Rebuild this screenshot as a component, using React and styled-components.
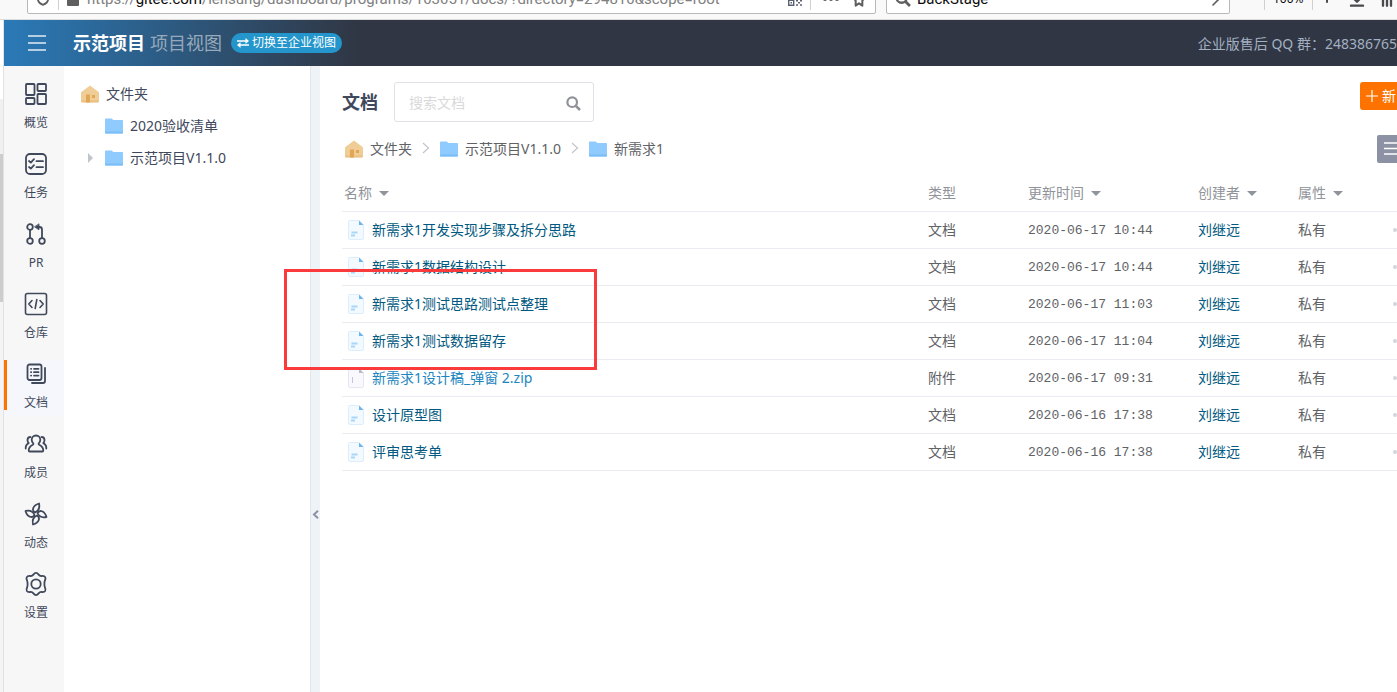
import React, { useState } from 'react';
import styled, { createGlobalStyle } from 'styled-components';

const GlobalStyle = createGlobalStyle`
  * {
    box-sizing: border-box;
  }
  body {
    margin: 0;
    background: #fff;
    color: #40485b;
    font-family: "Noto Sans", "Noto Sans CJK SC", sans-serif;
    font-size: 14px;
    line-height: 20px;
    overflow: hidden;
  }
  button, input {
    font: inherit;
    color: inherit;
    margin: 0;
    padding: 0;
    border: 0;
    background: none;
    outline: none;
  }
  a {
    color: inherit;
    text-decoration: none;
  }
  svg {
    display: block;
    flex: none;
  }
`

const Page = styled.div`
  display: flex;
  flex-direction: column;
  min-height: 100vh;
`

/* browser toolbar */
const BrowserBar = styled.div`
  display: flex;
  align-items: flex-end;
  gap: 10px;
  height: 20px;
  padding: 0 0 5px 27px;
  background: #f9f9fa;
  border-bottom: 1px solid #dcdcdc;
  overflow: hidden;
`
const BrowserField = styled.div`
  display: flex;
  align-items: center;
  flex: ${props => props.$width ? `0 0 ${props.$width}` : '1'};
  min-width: 0;
  height: 30px;
  padding: 0 8px;
  background: #fff;
  border: 1px solid #b8b8b8;
  border-radius: 2px;
  color: #5f5f5f;
`
const Url = styled.div`
  flex: 1;
  min-width: 0;
  padding-left: 8px;
  color: #808080;
  font-family: Roboto, sans-serif;
  font-size: 15px;
  white-space: nowrap;
  overflow: hidden;
`
const Host = styled.span`
  color: #0c0c0d;
`
const Divider = styled.span`
  flex: none;
  width: 1px;
  height: 22px;
  margin: 0 8px;
  background: #d0d0d0;
`
const PageActions = styled.div`
  display: flex;
  gap: 8px;
`
const BrowserSearch = styled.input`
  flex: 1;
  min-width: 0;
  padding-left: 6px;
  color: #0c0c0d;
  font-family: Roboto, sans-serif;
  font-size: 15px;
`
const BrowserTools = styled.div`
  display: flex;
  align-items: center;
  flex: none;
  width: 157px;
  height: 30px;
  padding-left: 16px;
  color: #4a4a4f;
  overflow: hidden;
`
const Zoom = styled.span`
  color: #0c0c0d;
  font-size: 12px;
`
const ToolIcons = styled.div`
  display: flex;
  gap: 16px;
`

/* page body */
const Body = styled.div`
  display: flex;
  flex: 1;
`
const Scroll = styled.div`
  flex: none;
  width: 4px;
  padding-top: 79px;
  background: linear-gradient(#fff 79px, #f4f4f4 79px);
  border-right: 1px solid #e2e2e2;
`
const ScrollTrack = styled.div`
  height: 55px;
  background: #f0f0f0;
`
const ScrollThumb = styled.div`
  height: 148px;
  background: #cdcdcd;
`
const Workspace = styled.div`
  display: flex;
  flex-direction: column;
  flex: 1;
  min-width: 0;
`
const Header = styled.header`
  display: flex;
  align-items: center;
  height: 46px;
  padding-left: 24px;
  color: #fff;
  background: linear-gradient(90deg, #2a7ab8 0, #303643 356px);
`
const MenuButton = styled.button`
  width: 18px;
  margin-right: 27px;
  color: #e3ecf4;
`
const ProjectName = styled.h1`
  margin: 0 5px 0 0;
  font-size: 18px;
  font-weight: 700;
`
const ViewName = styled.span`
  margin-right: 9px;
  color: #97a9bb;
  font-size: 18px;
`
const SwitchButton = styled.button`
  display: flex;
  align-items: center;
  gap: 3px;
  height: 20px;
  padding: 0 6px;
  border-radius: 10px;
  background: #2496cb;
  font-size: 12px;
`
const Support = styled.span`
  margin-left: auto;
  padding-top: 2px;
  color: #a3b0c2;
  white-space: nowrap;
`

const Main = styled.div`
  display: flex;
  flex: 1;
  position: relative;
`
const SideNav = styled.nav`
  display: flex;
  flex-direction: column;
  gap: 14px;
  flex: none;
  width: 60px;
  padding-top: 14px;
  background: #f7f7f7;
`
const NavItem = styled.a`
  display: flex;
  flex-direction: column;
  align-items: center;
  gap: 7px;
  position: relative;
  height: 56px;
  padding: 2px 0 0 4px;
  color: #40485b;
  background: ${props => props.$active ? '#f5f7fc' : 'transparent'};
  font-size: 12px;

  &::before {
    content: '';
    display: ${props => props.$active ? 'block' : 'none'};
    position: absolute;
    left: 0;
    top: 0;
    width: 3px;
    height: 50px;
    background: #fe7300;
  }
`
const Tree = styled.aside`
  flex: none;
  width: 246px;
  padding: 12px 0 0 17px;
`
const TreeRow = styled.a`
  display: flex;
  align-items: center;
  gap: 7px;
  height: 32px;
  padding-left: ${props => props.$child ? '24px' : '0'};
  position: relative;
`
const TreeArrow = styled.span`
  position: absolute;
  left: 7px;
  top: 11px;
  border: 5px solid transparent;
  border-left-color: #c0c4cc;
  border-right: 0;
`
const Splitter = styled.button`
  display: flex;
  align-items: flex-start;
  justify-content: center;
  flex: none;
  width: 10px;
  padding-top: 444px;
  background: #edf3f6;
  border-left: 1px solid #e0e6ea;
  color: #8c92a4;
`

const Content = styled.main`
  flex: 1;
  min-width: 0;
  padding: 16px 0 0 22px;
  overflow: hidden;
`
const TitleRow = styled.div`
  display: flex;
  align-items: flex-start;
`
const Title = styled.h2`
  margin: 0 16px 0 0;
  font-size: 18px;
  line-height: 40px;
`
const SearchBox = styled.label`
  display: flex;
  align-items: center;
  width: 200px;
  height: 40px;
  padding: 2px 12px 0 14px;
  border: 1px solid #dfe1e8;
  border-radius: 3px;
  color: #8f9298;
`
const SearchInput = styled.input`
  flex: 1;
  min-width: 0;

  &::placeholder {
    color: #d9d9d9;
    opacity: 1;
  }
`
const NewButton = styled.button`
  display: flex;
  align-items: center;
  gap: 4px;
  width: 37px;
  height: 28px;
  margin-left: auto;
  padding-left: 6px;
  border-radius: 3px 0 0 3px;
  background: #fe7300;
  color: #fff;
  overflow: hidden;
`
const CrumbRow = styled.div`
  display: flex;
  align-items: center;
  justify-content: space-between;
  height: 28px;
  margin: 13px 0;
`
const Crumbs = styled.nav`
  display: flex;
  align-items: center;
  gap: 10px;
  padding-left: 3px;
  color: #606266;
`
const Crumb = styled.a`
  display: flex;
  align-items: center;
  gap: 7px;
`
const ListButton = styled.button`
  display: flex;
  align-items: center;
  width: 20px;
  height: 28px;
  padding-left: 7px;
  border-radius: 2px 0 0 2px;
  background: #8c92a4;
  color: #fff;
  overflow: hidden;
`

const Table = styled.table`
  width: 100%;
  table-layout: fixed;
  border-collapse: collapse;
  color: #606266;
`
const Th = styled.th`
  width: ${props => props.$width || 'auto'};
  height: 35px;
  padding: 0 0 0 ${props => props.$first ? '2px' : '0'};
  border-bottom: 1px solid #ebecf1;
  color: #909399;
  font-weight: 400;
  text-align: left;
`
const SortButton = styled.button`
  display: flex;
  align-items: center;
  gap: 7px;
`
const Caret = styled.span`
  border: 5px solid transparent;
  border-top-color: #8f939c;
  border-bottom: 0;
`
const Td = styled.td`
  height: 37px;
  padding: 0;
  border-bottom: 1px solid #ebecf1;
  overflow: hidden;
`
const FileLink = styled.a`
  display: flex;
  align-items: center;
  gap: 8px;
  padding-left: 6px;
  color: ${props => props.$attachment ? '#1b86c0' : '#005980'};
`
const Time = styled.time`
  font-family: "Liberation Mono", monospace;
  font-size: 13px;
`
const UserLink = styled.a`
  color: #005980;
`
const MoreButton = styled.button`
  display: block;
  color: #d3d5db;
`
const Highlight = styled.div`
  position: absolute;
  left: 280px;
  top: 203px;
  width: 313px;
  height: 101px;
  border: 3px solid #fb3b3b;
  pointer-events: none;
`

const Line = ({ size = 24, width = 1.8, children }) => (
  <svg width={size} height={size} viewBox="0 0 24 24" fill="none" stroke="currentColor" strokeWidth={width} strokeLinecap="round" strokeLinejoin="round">
    {children}
  </svg>
)

const navIcons = {
  overview: (
    <Line>
      <rect x="2" y="2" width="8.5" height="11" rx="0.8" />
      <rect x="13.5" y="2" width="8.5" height="7" rx="0.8" />
      <rect x="2" y="16" width="8.5" height="6" rx="0.8" />
      <rect x="13.5" y="12" width="8.5" height="10" rx="0.8" />
    </Line>
  ),
  task: (
    <Line>
      <rect x="2" y="2" width="20" height="20" rx="4" />
      <path d="M5 9l1.8 1.6L10 7.2M5 15l1.8 1.6L10 13.2M12.5 9.2H19M12.5 15.2H19" />
    </Line>
  ),
  pr: (
    <Line>
      <circle cx="6" cy="5" r="2.8" />
      <circle cx="6" cy="19" r="2.8" />
      <circle cx="18" cy="19" r="2.8" />
      <path d="M6 8v8M18 16V7.5a2.5 2.5 0 0 0-2.5-2.5H13" />
      <path d="M15 2.2v5.6L10.8 5z" fill="currentColor" strokeWidth="0.8" />
    </Line>
  ),
  code: (
    <Line width={1.6}>
      <rect x="1.5" y="1.5" width="21" height="21" rx="2" />
      <path d="M8 8.5L4.8 12 8 15.5M16 8.5l3.2 3.5-3.2 3.5M12.8 7.5l-1.6 9" />
    </Line>
  ),
  doc: (
    <Line>
      <rect x="3.5" y="2.5" width="14" height="15.5" rx="2" />
      <path d="M21 6v13a2 2 0 0 1-2 2H8" />
      <path d="M7 6.8h.2M7 10.2h.2M7 13.6h.2M10 6.8h4.5M10 10.2h4.5M10 13.6h4.5" />
    </Line>
  ),
  member: (
    <Line width={1.8}>
      <path d="M12 3.5c-2.7 0-4.3 2-4.3 4.3 0 1.7.7 2.8 1.5 3.6.4.5.1 1-.4 1.3-2.2 1.1-4.1 2.4-4.1 5.8 0 .7.3 1 1 1h12.6c.7 0 1-.3 1-1 0-3.4-1.9-4.700-4.100-5.800-.5-.3-.8-.8-.4-1.300.8-.8 1.500-1.900 1.500-3.600 0-2.300-1.600-4.300-4.300-4.300z" />
      <path d="M6.500 5C4.700 5 3.500 6.400 3.500 8.200c0 1.300.5 2.200 1.200 2.900C3 12 1.500 13.500 1.700 16.500M17.500 5c1.800 0 3 1.400 3 3.200 0 1.300-.5 2.200-1.200 2.900 1.700.9 3.200 2.400 3 5.400" />
    </Line>
  ),
  activity: (
    <Line width={1.8}>
      <path d="M11 10.5C7.500 8.500 8.500 3.500 15 1.500 16 6 14.500 9 11 10.500z" />
      <path d="M13.500 11C15.500 7.500 20.500 8.500 22.500 15 18 16 15 14.500 13.500 11z" />
      <path d="M13 13.500c3.500 2 2.500 7-4 9C8 18 9.500 15 13 13.500z" />
      <path d="M10.500 13C8.500 16.500 3.500 15.500 1.500 9 6 8 9 9.500 10.500 13z" />
    </Line>
  ),
  setting: (
    <Line width={1.8}>
      <path d="M12 .9c1.200 0 1.800.6 2.600 1.700.9 1.200 1.700 1.600 3.200 1.400 1.700-.2 2.700-.1 3.400 1.100.6 1.100.5 1.900-.2 3.200-.8 1.500-.8 5.900 0 7.400.7 1.300.8 2.100.2 3.200-.7 1.200-1.700 1.300-3.400 1.100-1.500-.2-2.300.2-3.200 1.400-.8 1.100-1.400 1.700-2.600 1.700s-1.800-.6-2.600-1.700c-.9-1.200-1.700-1.600-3.200-1.400-1.700.2-2.700.1-3.400-1.100-.6-1.100-.5-1.900.2-3.200.8-1.500.8-5.900 0-7.400-.7-1.300-.8-2.100-.2-3.200.7-1.200 1.700-1.300 3.400-1.100 1.500.2 2.300-.2 3.200-1.400C10.200 1.500 10.800.9 12 .9z" />
      <circle cx="12" cy="12" r="4.700" />
    </Line>
  ),
}

const HomeIcon = () => (
  <svg width="18" height="18" viewBox="0 0 18 18">
    <path d="M9 0.500L17.600 7c.3.300.4.500.4.900V16a1.500 1.500 0 0 1-1.500 1.500h-15A1.500 1.500 0 0 1 0 16V7.900c0-.4.100-.6.400-.9z" fill="#f0cd97" />
    <path d="M5 9.500h4v8H5zM11 10h3v3h-3z" fill="#e2a755" />
    <path d="M0 15.500h18V16a1.500 1.500 0 0 1-1.500 1.500h-15A1.500 1.500 0 0 1 0 16z" fill="#e2a755" opacity=".35" />
  </svg>
)

const FolderIcon = () => (
  <svg width="18" height="16" viewBox="0 0 18 16">
    <path d="M0 1.500C0 .7.500.500 1 .500h5.500c.8 0 1.200 1.500 2 1.500H17c.6 0 1 .4 1 1V14.500c0 .6-.4 1-1 1H1c-.600 0-1-.4-1-1z" fill="#90cbff" />
    <path d="M0 13.500h18v1c0 .6-.4 1-1 1H1c-.6 0-1-.4-1-1z" fill="#7bbdf6" />
  </svg>
)

const FileIcon = ({ attachment }) => (
  <svg width="16" height="20" viewBox="0 0 16 20">
    <path d="M1.500.500H11L15.500 5v13a1.500 1.500 0 0 1-1.500 1.500H2A1.500 1.500 0 0 1 .500 18V1.500a1 1 0 0 1 1-1z" fill={attachment ? '#f8f8fd' : '#f2f9ff'} stroke={attachment ? '#e6e6f2' : '#dceefc'} />
    <path d="M11 .5L15.500 5H11z" fill={attachment ? '#b9b9cc' : '#6bb5ec'} />
    {attachment
      ? <path d="M4.500 9v6" stroke="#c5c5d8" />
      : <path d="M3.500 12.500h6M3 15.500h4" stroke="#a9d6f7" strokeWidth="2" />}
  </svg>
)

const SearchIcon = ({ size = 15 }) => (
  <svg width={size} height={size} viewBox="0 0 15 15" fill="none" stroke="currentColor" strokeWidth="2.2">
    <circle cx="6.200" cy="6.200" r="4.800" />
    <path d="M9.800 9.800l4.200 4.200" strokeWidth="2.600" />
  </svg>
)

const Chevron = () => (
  <svg width="8" height="14" viewBox="0 0 8 14" fill="none" stroke="#c0c4cc" strokeWidth="1.2">
    <path d="M1 1L6.500 6 1 11" />
  </svg>
)

const navItems = [
  { icon: 'overview', label: '概览' },
  { icon: 'task', label: '任务' },
  { icon: 'pr', label: 'PR' },
  { icon: 'code', label: '仓库' },
  { icon: 'doc', label: '文档', active: true },
  { icon: 'member', label: '成员' },
  { icon: 'activity', label: '动态' },
  { icon: 'setting', label: '设置' },
]

const files = [
  { name: '新需求1开发实现步骤及拆分思路', type: '文档', time: '2020-06-17 10:44' },
  { name: '新需求1数据结构设计', type: '文档', time: '2020-06-17 10:44' },
  { name: '新需求1测试思路测试点整理', type: '文档', time: '2020-06-17 11:03' },
  { name: '新需求1测试数据留存', type: '文档', time: '2020-06-17 11:04' },
  { name: '新需求1设计稿_弹窗 2.zip', type: '附件', time: '2020-06-17 09:31', attachment: true },
  { name: '设计原型图', type: '文档', time: '2020-06-16 17:38' },
  { name: '评审思考单', type: '文档', time: '2020-06-16 17:38' },
]

const Browser = () => {
  const [query, setQuery] = useState('BackStage');
  return (
    <BrowserBar>
      <BrowserField>
        <Line size={14} width={3}><path d="M12 2l9 2v7c0 5-3 9-9 11-6-2-9-6-9-11V4z" /></Line>
        <Divider/>
        <svg width="12" height="14" viewBox="0 0 12 14" fill="#5f5f5f">
          <path d="M0 6h12v7a1 1 0 0 1-1 1H1a1 1 0 0 1-1-1z" />
          <path d="M3 6V3.500a3 3 0 0 1 6 0V6" fill="none" stroke="#5f5f5f" strokeWidth="2" />
        </svg>
        <Url>https://<Host>gitee.com</Host>/lensung/dashboard/programs/103051/docs/?directory=294810&amp;scope=root</Url>
        <svg width="14" height="14" viewBox="0 0 14 14" fill="none" stroke="#5a6070" strokeWidth="1.4">
          <path d="M.7.700h5v5h-5zM8.300.700h5v5h-5zM.7 8.300h5v5h-5zM2.500 10.800h1.500M8 8.700h2M12 8.700h2M10 10.800h2M8 13h2M12 13h2" />
        </svg>
        <Divider/>
        <PageActions>
          <svg width="24" height="16" viewBox="0 0 24 16" fill="currentColor">
            <circle cx="6" cy="8" r="2" /><circle cx="12" cy="8" r="2" /><circle cx="18" cy="8" r="2" />
          </svg>
          <Line size={16} width={3}><path d="M12 2l3 6.500 7 .8-5 4.900v7.800L12 18.500 7 22v-7.800L2 9.300l7-.8z" /></Line>
        </PageActions>
      </BrowserField>
      <BrowserField $width="344px">
        <SearchIcon size={16}/>
        <BrowserSearch aria-label="Search" value={query} onChange={e => setQuery(e.target.value)}/>
        <Line size={16} width={2.5}><path d="M2 12h19M12 3l9 9-9 9" /></Line>
      </BrowserField>
      <BrowserTools>
        <Divider/>
        <Zoom>100%</Zoom>
        <Divider/>
        <ToolIcons>
          <Line size={12} width={4}><path d="M12 2v20" /></Line>
          <Line size={16} width={3.5}><path d="M12 1v13M6 10l6 6 6-6M3 22h18" /></Line>
          <Line size={16} width={3.5}><path d="M3 2v20M9 2v20M15 2v20" /></Line>
        </ToolIcons>
      </BrowserTools>
    </BrowserBar>
  )
}

const App = () => {
  const [keyword, setKeyword] = useState('');
  return (
    <Page>
      <GlobalStyle/>
      <Browser/>
      <Body>
        <Scroll>
          <ScrollTrack/>
          <ScrollThumb/>
        </Scroll>
        <Workspace>
          <Header>
            <MenuButton aria-label="菜单">
              <svg width="18" height="16" viewBox="0 0 18 16" stroke="currentColor" strokeWidth="1.5">
                <path d="M0 1h18M0 8h18M0 15h18" />
              </svg>
            </MenuButton>
            <ProjectName>示范项目</ProjectName>
            <ViewName>项目视图</ViewName>
            <SwitchButton>
              <svg width="12" height="10" viewBox="0 0 12 10" fill="#fff">
                <path d="M0 2.200h8.500V0L12 3 8.500 6V3.800H0zM12 6.200H3.500V4L0 7l3.500 3V7.800H12z" />
              </svg>
              切换至企业视图
            </SwitchButton>
            <Support>企业版售后 QQ 群：248386765</Support>
          </Header>
          <Main>
            <SideNav>
              {navItems.map(item => (
                <NavItem key={item.icon} href="#" $active={item.active}>
                  {navIcons[item.icon]}
                  {item.label}
                </NavItem>
              ))}
            </SideNav>
            <Tree>
              <TreeRow href="#"><HomeIcon/>文件夹</TreeRow>
              <TreeRow href="#" $child><FolderIcon/>2020验收清单</TreeRow>
              <TreeRow href="#" $child><TreeArrow/><FolderIcon/>示范项目V1.1.0</TreeRow>
            </Tree>
            <Splitter aria-label="收起">
              <svg width="7" height="9" viewBox="0 0 7 9" fill="none" stroke="currentColor" strokeWidth="2">
                <path d="M6 .8L2 4.500 6 8.200" />
              </svg>
            </Splitter>
            <Content>
              <TitleRow>
                <Title>文档</Title>
                <SearchBox>
                  <SearchInput aria-label="搜索文档" placeholder="搜索文档" value={keyword} onChange={e => setKeyword(e.target.value)}/>
                  <SearchIcon/>
                </SearchBox>
                <NewButton>
                  <svg width="12" height="12" viewBox="0 0 12 12" stroke="#fff" strokeWidth="1.2">
                    <path d="M6 0v12M0 6h12" />
                  </svg>
                  新
                </NewButton>
              </TitleRow>
              <CrumbRow>
                <Crumbs>
                  <Crumb href="#"><HomeIcon/>文件夹</Crumb>
                  <Chevron/>
                  <Crumb href="#"><FolderIcon/>示范项目V1.1.0</Crumb>
                  <Chevron/>
                  <Crumb href="#"><FolderIcon/>新需求1</Crumb>
                </Crumbs>
                <ListButton aria-label="列表">
                  <svg width="14" height="14" viewBox="0 0 14 14" stroke="#fff" strokeWidth="1.6">
                    <path d="M0 1h14M0 6.500h14M0 12h14" />
                  </svg>
                </ListButton>
              </CrumbRow>
              <Table>
                <thead>
                  <tr>
                    <Th $first><SortButton>名称<Caret/></SortButton></Th>
                    <Th $width="100px">类型</Th>
                    <Th $width="170px"><SortButton>更新时间<Caret/></SortButton></Th>
                    <Th $width="100px"><SortButton>创建者<Caret/></SortButton></Th>
                    <Th $width="95px"><SortButton>属性<Caret/></SortButton></Th>
                    <Th $width="4px"/>
                  </tr>
                </thead>
                <tbody>
                  {files.map(file => (
                    <tr key={file.name}>
                      <Td>
                        <FileLink href="#" $attachment={file.attachment}>
                          <FileIcon attachment={file.attachment}/>
                          {file.name}
                        </FileLink>
                      </Td>
                      <Td>{file.type}</Td>
                      <Td><Time>{file.time}</Time></Td>
                      <Td><UserLink href="#">刘继远</UserLink></Td>
                      <Td>私有</Td>
                      <Td>
                        <MoreButton aria-label="更多">
                          <svg width="16" height="4" viewBox="0 0 16 4" fill="currentColor">
                            <circle cx="2" cy="2" r="2" /><circle cx="8" cy="2" r="2" /><circle cx="14" cy="2" r="2" />
                          </svg>
                        </MoreButton>
                      </Td>
                    </tr>
                  ))}
                </tbody>
              </Table>
            </Content>
            <Highlight/>
          </Main>
        </Workspace>
      </Body>
    </Page>
  )
}

export default App
